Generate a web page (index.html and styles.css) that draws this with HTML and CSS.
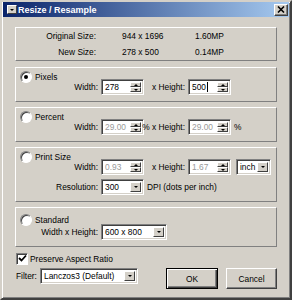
FILE: index.html
```html
<!DOCTYPE html>
<html lang="en">
<head>
    <meta charset="UTF-8">
    <title>Resize / Resample</title>
    <link rel="stylesheet" href="styles.css">
</head>
<body>
    <div class="window">
        <div class="titlebar">
            <span class="sysmenu"><span class="tri-down"></span></span>
            <span class="title">Resize / Resample</span>
            <span class="close">
                <svg width="8" height="7" viewBox="0 0 8 7"><path d="M1 0.5 L7 6.5 M7 0.5 L1 6.5" stroke="#000" stroke-width="1.6"/></svg>
            </span>
        </div>

        <div class="content">
            <div class="info">
                <div class="info-row"><span class="info-label">Original Size:</span><span class="info-dim">944 x 1696</span><span>1.60MP</span></div>
                <div class="info-row"><span class="info-label">New Size:</span><span class="info-dim">278 x 500</span><span>0.14MP</span></div>
            </div>

            <div class="group">
                <div class="option"><span class="radio checked"></span>Pixels</div>
                <div class="fields">
                    <span class="lbl">Width:</span>
                    <span class="field spin"><span class="val">278</span><span class="arrows"><span class="arr"><span class="tri-up"></span></span><span class="arr"><span class="tri-down"></span></span></span></span>
                    <span class="lbl2">x Height:</span>
                    <span class="field spin"><span class="val">500<span class="caret"></span></span><span class="arrows"><span class="arr"><span class="tri-up"></span></span><span class="arr"><span class="tri-down"></span></span></span></span>
                </div>
            </div>

            <div class="group">
                <div class="option"><span class="radio"></span>Percent</div>
                <div class="fields">
                    <span class="lbl">Width:</span>
                    <span class="field spin"><span class="val disabled">29.00</span><span class="arrows"><span class="arr"><span class="tri-up"></span></span><span class="arr"><span class="tri-down"></span></span></span></span>
                    <span class="lbl2">% x Height:</span>
                    <span class="field spin"><span class="val disabled">29.00</span><span class="arrows"><span class="arr"><span class="tri-up"></span></span><span class="arr"><span class="tri-down"></span></span></span></span>
                    <span class="unit">%</span>
                </div>
            </div>

            <div class="group">
                <div class="option"><span class="radio"></span>Print Size</div>
                <div class="fields">
                    <span class="lbl">Width:</span>
                    <span class="field spin"><span class="val disabled">0.93</span><span class="arrows"><span class="arr"><span class="tri-up"></span></span><span class="arr"><span class="tri-down"></span></span></span></span>
                    <span class="lbl2">x Height:</span>
                    <span class="field spin"><span class="val disabled">1.67</span><span class="arrows"><span class="arr"><span class="tri-up"></span></span><span class="arr"><span class="tri-down"></span></span></span></span>
                    <span class="field combo inch"><span class="val">inch</span><span class="drop"><span class="tri-down"></span></span></span>
                </div>
                <div class="fields second">
                    <span class="lbl">Resolution:</span>
                    <span class="field combo"><span class="val">300</span><span class="drop"><span class="tri-down"></span></span></span>
                    <span class="unit">DPI (dots per inch)</span>
                </div>
            </div>

            <div class="group standard">
                <div class="option"><span class="radio"></span>Standard</div>
                <div class="fields">
                    <span class="lbl">Width x Height:</span>
                    <span class="field combo wide"><span class="val">600 x 800</span><span class="drop"><span class="tri-down"></span></span></span>
                </div>
            </div>

            <div class="footer">
                <div class="options">
                    <div class="check-row">
                        <span class="checkbox">
                            <svg width="9" height="9" viewBox="0 0 9 9"><path d="M1 4 L3.5 6.5 L8 1.5" fill="none" stroke="#000" stroke-width="1.8"/></svg>
                        </span>
                        Preserve Aspect Ratio
                    </div>
                    <div class="filter-row">
                        <span class="filter-lbl">Filter:</span>
                        <span class="field combo filter"><span class="val">Lanczos3 (Default)</span><span class="drop"><span class="tri-down"></span></span></span>
                    </div>
                </div>
                <div class="buttons">
                    <button class="btn default">OK</button>
                    <button class="btn">Cancel</button>
                </div>
            </div>
        </div>
    </div>
</body>
</html>
```

FILE: styles.css
```css
body {
    margin: 0;
    font-family: 'Liberation Sans', Arial, sans-serif;
    font-size: 8.4px;
    color: #000;
    background: #d4d0c8;
}
.window {
    width: 292px;
    height: 300px;
    box-sizing: border-box;
    padding: 0 1px;
    border: 2px solid;
    border-color: #d4d0c8 #404040 #404040 #d4d0c8;
    box-shadow: inset 1px 1px #fff, inset -1px -1px #808080;
    background: #d4d0c8;
}
.titlebar {
    height: 15px;
    display: flex;
    align-items: center;
    padding: 0 1px 0 4px;
    background: linear-gradient(90deg, #0a246a, #a6caf0);
    color: #fff;
    font-weight: bold;
    font-size: 9px;
}
.sysmenu {
    width: 10px;
    height: 9px;
    box-sizing: border-box;
    display: flex;
    align-items: center;
    justify-content: center;
    background: #d4d0c8;
    border: 1px solid;
    border-color: #fff #404040 #404040 #fff;
}
.title {
    margin-left: 1px;
}
.close {
    margin-left: auto;
    width: 14px;
    height: 12px;
    box-sizing: border-box;
    display: flex;
    align-items: center;
    justify-content: center;
    background: #d4d0c8;
    border: 1px solid;
    border-color: #fff #404040 #404040 #fff;
    box-shadow: inset -1px -1px #808080;
}
.content {
    padding: 10px 12px 0;
}
.info {
    border: 1px solid;
    border-color: #fff #808080 #808080 #fff;
}
.info-row {
    display: flex;
    line-height: 16px;
}
.info-label {
    width: 80px;
    text-align: right;
}
.info-dim {
    margin-left: 26px;
    width: 73px;
}
.group {
    margin-top: 5px;
    padding: 2px 0 6px;
    border: 1px solid;
    border-color: #fff #808080 #808080 #fff;
}
.info + .group {
    margin-top: 6px;
}
.group.standard {
    padding-top: 5px;
}
.option {
    display: flex;
    align-items: center;
    height: 13px;
    padding-left: 4px;
}
.radio {
    width: 12px;
    height: 12px;
    box-sizing: border-box;
    margin-right: 3px;
    border-radius: 50%;
    border: 1px solid;
    border-color: #808080 #fff #fff #808080;
    box-shadow: inset 1px 1px #404040;
    background: #fff;
    display: flex;
    align-items: center;
    justify-content: center;
}
.radio.checked::after {
    content: '';
    width: 4px;
    height: 4px;
    border-radius: 50%;
    background: #000;
}
.fields {
    display: flex;
    align-items: center;
    margin-top: -4px;
    height: 16px;
}
.fields.second {
    margin-top: 4px;
}
.standard .fields {
    margin-top: -2px;
}
.lbl {
    width: 82px;
    margin-right: 3px;
    text-align: right;
}
.lbl2 {
    width: 41px;
    margin-right: 3px;
    display: flex;
    justify-content: flex-end;
    white-space: nowrap;
}
.unit {
    margin-left: 3px;
    white-space: nowrap;
}
.field {
    height: 16px;
    width: 43px;
    box-sizing: border-box;
    display: flex;
    border: 1px solid;
    border-color: #808080 #fff #fff #808080;
    box-shadow: inset 1px 1px #404040, inset -1px -1px #d4d0c8;
    background: #fff;
    padding: 2px;
}
.val {
    flex: 1;
    display: flex;
    align-items: center;
    padding-left: 1px;
    overflow: hidden;
    white-space: nowrap;
}
.val.disabled {
    color: #9a9a9a;
}
.caret {
    width: 1px;
    height: 10px;
    margin-left: 1px;
    background: #000;
}
.arrows {
    width: 11px;
    display: flex;
    flex-direction: column;
}
.arr, .drop {
    flex: 1;
    display: flex;
    align-items: center;
    justify-content: center;
    background: #d4d0c8;
    box-sizing: border-box;
    border: 1px solid;
    border-color: #fff #404040 #404040 #fff;
}
.drop {
    flex: 0 0 11px;
}
.tri-up, .tri-down {
    width: 0;
    height: 0;
    border-left: 2px solid transparent;
    border-right: 2px solid transparent;
}
.tri-up {
    border-bottom: 2px solid #000;
}
.tri-down {
    border-top: 2px solid #000;
}
.combo.inch {
    width: 35px;
    margin-left: 5px;
}
.combo.wide {
    width: 66px;
}
.footer {
    display: flex;
    margin-top: 5px;
}
.options {
    margin-left: 1px;
}
.check-row {
    display: flex;
    align-items: center;
    height: 13px;
}
.checkbox {
    width: 12px;
    height: 12px;
    box-sizing: border-box;
    margin-right: 2px;
    border: 1px solid;
    border-color: #808080 #fff #fff #808080;
    box-shadow: inset 1px 1px #404040;
    background: #fff;
    display: flex;
    align-items: center;
    justify-content: center;
}
.filter-row {
    display: flex;
    align-items: center;
    margin-top: 3px;
}
.filter-lbl {
    width: 24px;
}
.combo.filter {
    width: 98px;
}
.buttons {
    margin-left: auto;
    margin-top: 16px;
    display: flex;
    gap: 8px;
}
.btn {
    width: 51px;
    height: 21px;
    padding: 0;
    font: inherit;
    color: #000;
    background: #d4d0c8;
    border: 1px solid;
    border-color: #fff #404040 #404040 #fff;
    box-shadow: inset -1px -1px #808080;
}
.btn.default {
    width: 52px;
    border-color: #000;
    box-shadow: inset 1px 1px #fff, inset -1px -1px #404040, inset -2px -2px #808080;
}
```
